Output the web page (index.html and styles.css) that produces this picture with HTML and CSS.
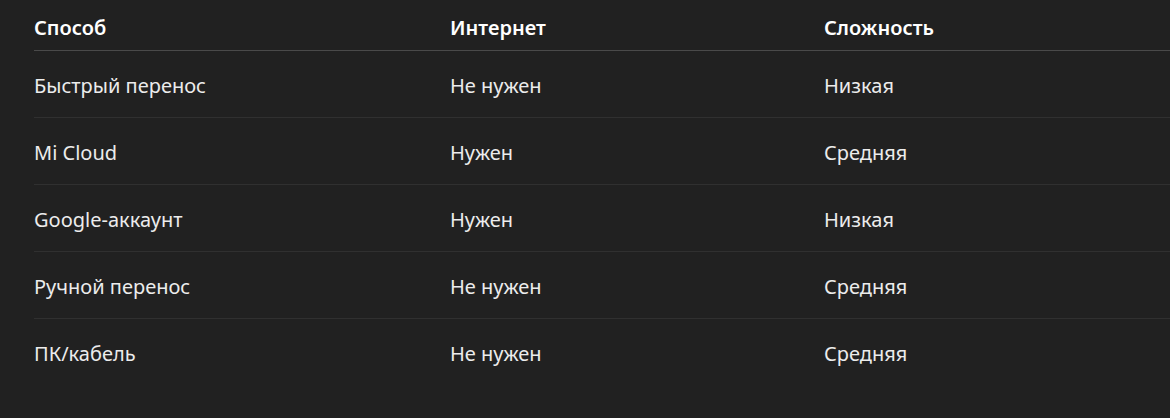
FILE: index.html
```html
<!DOCTYPE html>
<html lang="ru">
<head>
<meta charset="utf-8">
<link rel="stylesheet" href="styles.css">
</head>
<body>
<div class="table">
  <div class="row head">
    <div class="cell">Способ</div>
    <div class="cell">Интернет</div>
    <div class="cell">Сложность</div>
  </div>
  <div class="row">
    <div class="cell">Быстрый перенос</div>
    <div class="cell">Не нужен</div>
    <div class="cell">Низкая</div>
  </div>
  <div class="row">
    <div class="cell">Mi Cloud</div>
    <div class="cell">Нужен</div>
    <div class="cell">Средняя</div>
  </div>
  <div class="row">
    <div class="cell">Google-аккаунт</div>
    <div class="cell">Нужен</div>
    <div class="cell">Низкая</div>
  </div>
  <div class="row">
    <div class="cell">Ручной перенос</div>
    <div class="cell">Не нужен</div>
    <div class="cell">Средняя</div>
  </div>
  <div class="row last">
    <div class="cell">ПК/кабель</div>
    <div class="cell">Не нужен</div>
    <div class="cell">Средняя</div>
  </div>
</div>
</body>
</html>
```

FILE: styles.css
```css
html, body {
  margin: 0;
  padding: 0;
  background: #212121;
}
body {
  font-family: "Noto Sans", "Open Sans", sans-serif;
  font-size: 20px;
  color: #ececec;
  padding-left: 34px;
  height: 418px;
  overflow: hidden;
}
.table {
  display: flex;
  flex-direction: column;
}
.row {
  display: grid;
  grid-template-columns: 416px 374px 1fr;
  align-items: center;
  height: 66px;
  padding-top: 2px;
  box-sizing: border-box;
  border-bottom: 1px solid #303030;
}
.row.head {
  height: 51px;
  padding-top: 4px;
  border-bottom: 1px solid #4a4a4a;
  font-weight: 600;
  color: #ffffff;
}
.row:not(.head) {
  height: 67px;
}
.row.last {
  border-bottom: none;
}
.cell {
  white-space: nowrap;
}
```
